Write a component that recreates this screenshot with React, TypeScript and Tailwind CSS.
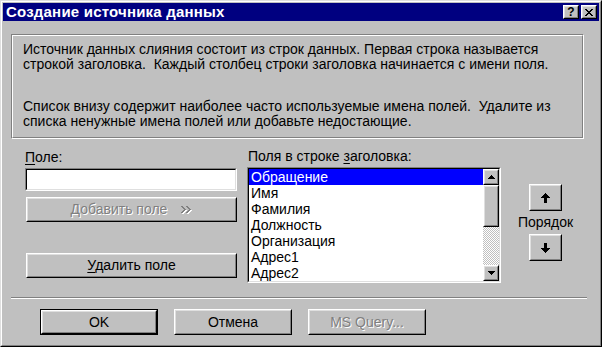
import React from "react";

const FONT = { fontFamily: '"Liberation Sans", Arial, sans-serif' };

function Raised({
  className = "",
  children,
}: {
  className?: string;
  children?: React.ReactNode;
}) {
  return (
    <div
      className={`border border-t-white border-l-white border-b-black border-r-black bg-[#c0c0c0] ${className}`}
    >
      <div className="w-full h-full border border-t-[#dfdfdf] border-l-[#dfdfdf] border-b-[#808080] border-r-[#808080] flex items-center justify-center">
        {children}
      </div>
    </div>
  );
}

function Sunken({
  className = "",
  children,
}: {
  className?: string;
  children?: React.ReactNode;
}) {
  return (
    <div
      className={`border border-t-[#808080] border-l-[#808080] border-b-white border-r-white ${className}`}
    >
      <div className="w-full h-full border border-t-black border-l-black border-b-[#dfdfdf] border-r-[#dfdfdf] bg-white flex overflow-hidden">
        {children}
      </div>
    </div>
  );
}

function Disabled({ children }: { children: React.ReactNode }) {
  return (
    <span className="text-[#808080] [text-shadow:1px_1px_0_#ffffff]">
      {children}
    </span>
  );
}

function ArrowUp() {
  return (
    <svg width="9" height="10" viewBox="0 0 9 10" shapeRendering="crispEdges">
      <path d="M4 0h1v1h1v1h1v1h1v1h1v1H6v5H3V5H0V4h1V3h1V2h1V1h1z" fill="#000" />
    </svg>
  );
}

function ArrowDown() {
  return (
    <svg width="9" height="10" viewBox="0 0 9 10" shapeRendering="crispEdges">
      <path d="M3 0h3v5h3v1H8v1H7v1H6v1H5v1H4V9H3V8H2V7H1V6H0V5h3z" fill="#000" />
    </svg>
  );
}

function SmallUp() {
  return (
    <svg width="7" height="4" viewBox="0 0 7 4" shapeRendering="crispEdges">
      <path d="M3 0h1v1h1v1h1v1h1v1H0V3h1V2h1V1h1z" fill="#000" />
    </svg>
  );
}

function SmallDown() {
  return (
    <svg width="7" height="4" viewBox="0 0 7 4" shapeRendering="crispEdges">
      <path d="M0 0h7v1H6v1H5v1H4v1H3V3H2V2H1V1H0z" fill="#000" />
    </svg>
  );
}

function DoubleChevron() {
  const d =
    "M0 0h2v1h1v1h1v1h1v1H4v1H3v1H2v1H0V6h1V5h1V4h1V3H2V2H1V1H0z M5 0h2v1h1v1h1v1h1v1H9v1H8v1H7v1H5V6h1V5h1V4h1V3H7V2H6V1H5z";
  return (
    <svg width="11" height="8" viewBox="0 0 11 8" shapeRendering="crispEdges">
      <path d={d} fill="#fff" transform="translate(1,1)" />
      <path d={d} fill="#808080" />
    </svg>
  );
}

const items = [
  "Обращение",
  "Имя",
  "Фамилия",
  "Должность",
  "Организация",
  "Адрес1",
  "Адрес2",
];

export default function App() {
  return (
    <div
      className="w-[602px] h-[347px] bg-[#c0c0c0] border border-t-[#dfdfdf] border-l-[#dfdfdf] border-b-black border-r-black text-[14px] leading-[15px] text-black"
      style={FONT}
    >
      <div className="w-full h-full border border-t-white border-l-white border-b-[#808080] border-r-[#808080] p-px flex flex-col">
        {/* Title bar */}
        <div className="h-[18px] bg-[#000080] flex items-center pl-[3px] pr-[2px]">
          <span className="text-white font-bold text-[15px] leading-[18px] flex-1 tracking-[0.2px]">
            Создание источника данных
          </span>
          <Raised className="w-[16px] h-[14px]">
            <span className="font-bold text-[12px] leading-[12px]">?</span>
          </Raised>
          <Raised className="w-[16px] h-[14px] ml-[2px]">
            <svg width="8" height="7" viewBox="0 0 8 7" shapeRendering="crispEdges">
              <path
                d="M0 0h2v1h1v1h2V1h1V0h2v1H7v1H6v1H5v1h1v1h1v1h1v1H6V6H5V5H3v1H2v1H0V6h1V5h1V4h1V3H2V2H1V1H0z"
                fill="#000"
              />
            </svg>
          </Raised>
        </div>

        {/* Info box */}
        <div className="ml-[8px] mt-[13px] w-[573px] h-[105px] border border-t-[#808080] border-l-[#808080] border-b-white border-r-white">
          <div className="w-full h-full border border-t-white border-l-white border-b-[#808080] border-r-[#808080] pl-[10px] pt-[6px]">
            <p>
              Источник данных слияния состоит из строк данных. Первая строка называется
              <br />
              строкой заголовка.&nbsp; Каждый столбец строки заголовка начинается с имени поля.
            </p>
            <p className="mt-[27px]">
              Список внизу содержит наиболее часто используемые имена полей.&nbsp; Удалите из
              <br />
              списка ненужные имена полей или добавьте недостающие.
            </p>
          </div>
        </div>

        {/* Middle section */}
        <div className="flex items-start mt-[10px] ml-[22px]">
          <div className="w-[212px] mt-px flex flex-col">
            <div className="h-[15px]">
              <u className="underline-offset-2">П</u>оле:
            </div>
            <Sunken className="mt-[3px] h-[23px] w-[212px]" />
            <Raised className="mt-[6px] h-[25px] w-[211px] ml-px">
              <Disabled>
                <u className="underline-offset-2">Д</u>обавить поле
              </Disabled>
              <span className="ml-[14px] flex">
                <DoubleChevron />
              </span>
            </Raised>
            <Raised className="mt-[31px] h-[25px] w-[211px] ml-px">
              <span>
                <u className="underline-offset-2">У</u>далить поле
              </span>
            </Raised>
          </div>

          <div className="ml-[10px] flex flex-col">
            <div className="h-[15px] ml-px">
              Поля в строке <u className="underline-offset-2">з</u>аголовка:
            </div>
            <Sunken className="mt-[3px] w-[254px] h-[116px]">
              <div className="flex-1 flex flex-col">
                {items.map((it, i) => (
                  <div
                    key={it}
                    className={`h-[16px] leading-[16px] pl-[2px] ${
                      i === 0 ? "bg-[#0000ff] text-white" : ""
                    }`}
                  >
                    {it}
                  </div>
                ))}
              </div>
              <div className="w-[16px] h-full flex flex-col">
                <Raised className="w-[16px] h-[16px]">
                  <SmallUp />
                </Raised>
                <Raised className="w-[16px] h-[42px]" />
                <div className="flex-1 bg-[repeating-conic-gradient(#ffffff_0_25%,#c0c0c0_0_50%)] bg-[length:2px_2px]" />
                <Raised className="w-[16px] h-[16px]">
                  <SmallDown />
                </Raised>
              </div>
            </Sunken>
          </div>

          <div className="ml-[28px] mt-[35px] flex flex-col items-center w-[33px]">
            <Raised className="w-[33px] h-[27px]">
              <ArrowUp />
            </Raised>
            <div className="h-[23px] leading-[23px] whitespace-nowrap">Порядок</div>
            <Raised className="w-[33px] h-[27px]">
              <ArrowDown />
            </Raised>
          </div>
        </div>

        {/* Separator */}
        <div className="ml-[8px] mt-[14px] w-[576px] border-t border-t-[#808080] border-b border-b-white" />

        {/* Bottom buttons */}
        <div className="flex ml-[37px] mt-[10px] gap-[16px]">
          <div className="border border-black">
            <Raised className="w-[116px] h-[24px]">
              <span>OK</span>
            </Raised>
          </div>
          <Raised className="w-[118px] h-[26px]">
            <span>Отмена</span>
          </Raised>
          <Raised className="w-[118px] h-[26px]">
            <Disabled>MS Query...</Disabled>
          </Raised>
        </div>
      </div>
    </div>
  );
}
